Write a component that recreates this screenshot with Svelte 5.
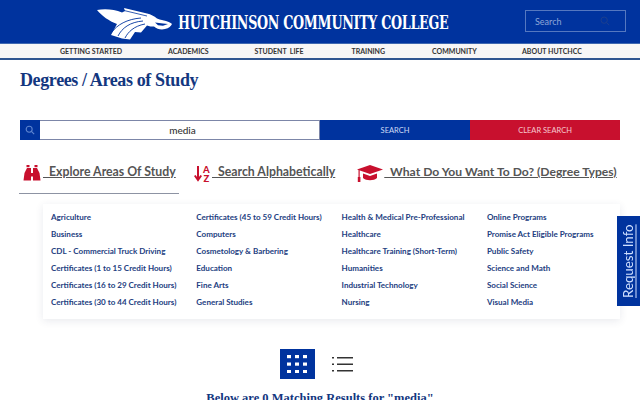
<script>
  const nav = ['GETTING STARTED', 'ACADEMICS', 'STUDENT  LIFE', 'TRAINING', 'COMMUNITY', 'ABOUT HUTCHCC'];
  const cols = [
    ['Agriculture','Business','CDL - Commercial Truck Driving','Certificates (1 to 15 Credit Hours)','Certificates (16 to 29 Credit Hours)','Certificates (30 to 44 Credit Hours)'],
    ['Certificates (45 to 59 Credit Hours)','Computers','Cosmetology & Barbering','Education','Fine Arts','General Studies'],
    ['Health & Medical Pre-Professional','Healthcare','Healthcare Training (Short-Term)','Humanities','Industrial Technology','Nursing'],
    ['Online Programs','Promise Act Eligible Programs','Public Safety','Science and Math','Social Science','Visual Media']
  ];
</script>

<header class="top">
  <div class="brand">
    <svg class="logo" viewBox="0 0 76 33" width="76" height="33" aria-hidden="true">
      <path fill="#fff" d="M0 3 C7 1.500 17 2 25 5.500 L28 4 L27 1 L50 6.500 C54 7.500 57 9 60 11.500 C64 13 66 13 69 14 C72 15 74 16 75 17 C74 19 72 21.500 68 22 C64 23 60 22 57 19.500 C55 19.500 52 19.500 50 18.500 L44 25.500 L38 25 L33 32.500 L25 31.500 L14 28 L20 17 C12 14 5 9 0 3 Z"/>
      <g fill="none" stroke="#00339e" stroke-width="0.900">
        <path d="M15 25 C20 18 30 12 44 11"/>
        <path d="M21 29 C25 21 33 15 46 14"/>
        <path d="M28 31 C31 25 37 19 48 17"/>
      </g>
      <path fill="#00339e" d="M58 15.500 L66 16.500 L71 17 L66 18.800 L61 18.300 Z"/>
      <path fill="none" stroke="#00339e" stroke-width="0.800" d="M27 3.500 L50 9"/>
    </svg>
    <span class="college">HUTCHINSON COMMUNITY COLLEGE</span>
  </div>
  <div class="topsearch">
    <span>Search</span>
    <svg viewBox="0 0 12 12" width="10" height="10" aria-hidden="true"><circle cx="5" cy="5" r="3.800" fill="none" stroke="#1c3f8f" stroke-width="1.200"/><path d="M8 8l3 3" stroke="#1c3f8f" stroke-width="1.200"/></svg>
  </div>
</header>

<nav class="menu">
  {#each nav as label}
    <span class="item">{label}</span>
  {/each}
</nav>

<main>
  <h1>Degrees / Areas of Study</h1>

  <div class="searchbar">
    <span class="lens">
      <svg viewBox="0 0 12 12" width="10" height="10" aria-hidden="true"><circle cx="5" cy="5" r="3.600" fill="none" stroke="#5f86d0" stroke-width="1.300"/><path d="M8 8l3 3" stroke="#5f86d0" stroke-width="1.300"/></svg>
    </span>
    <span class="query">media</span>
    <span class="btn blue">SEARCH</span>
    <span class="btn red">CLEAR SEARCH</span>
  </div>

  <div class="tabs">
    <div class="tab first">
      <svg viewBox="0 0 18 16" width="18" height="16" aria-hidden="true"><path fill="#c8102e" d="M0.500 15.500 L1.500 8 L4 3 H8 V15.500 Z M10 15.500 V3 H14 L16.500 8 L17.500 15.500 Z"/><rect x="8" y="8" width="2" height="3.500" fill="#c8102e"/><rect x="3.500" y="0" width="3" height="2.200" fill="#c8102e"/><rect x="11.500" y="0" width="3" height="2.200" fill="#c8102e"/></svg>
      <a>&nbsp;&nbsp;Explore Areas Of Study</a>
    </div>
    <div class="tab second">
      <svg viewBox="0 0 18 17" width="18" height="17" aria-hidden="true"><path d="M4 1v13M0.800 10.500 4 15l3.200-4.500" fill="none" stroke="#c8102e" stroke-width="2"/><text x="9" y="7.500" class="az">A</text><text x="9.500" y="16.500" class="az">Z</text></svg>
      <a>&nbsp;&nbsp;Search Alphabetically</a>
    </div>
    <div class="tab third">
      <svg viewBox="0 0 26 17" width="26" height="17" aria-hidden="true"><path fill="#c8102e" d="M13 0 26 4.500 13 9 0 4.500Z"/><path fill="#c8102e" d="M6 8.500 13 11l7-2.500v4.500c-3 3-11 3-14 0Z"/><rect x="1.500" y="5" width="1.200" height="8" fill="#c8102e"/><rect x="0.800" y="12" width="2.600" height="5" fill="#c8102e"/></svg>
      <a>&nbsp;&nbsp;What Do You Want To Do? (Degree Types)</a>
    </div>
  </div>

  <section class="panel">
    {#each cols as col}
      <ul>
        {#each col as entry}<li>{entry}</li>{/each}
      </ul>
    {/each}
  </section>

  <div class="views">
    <span class="grid-btn">
      <svg viewBox="0 0 20 18" width="20" height="18" aria-hidden="true">
        {#each [0, 7.500, 15] as y}
          {#each [0, 8, 16] as x}<rect {x} {y} width="4" height="3.200" fill="#fff"/>{/each}
        {/each}
      </svg>
    </span>
    <svg class="list-btn" viewBox="0 0 21 16" width="21" height="16" aria-hidden="true">
      {#each [1, 7.500, 14] as y}
        <rect x="0" {y} width="2" height="1.500" fill="#333"/><rect x="5" {y} width="16" height="1.500" fill="#333"/>
      {/each}
    </svg>
  </div>

  <h2>Below are 0 Matching Results for "media"</h2>
</main>

<a class="request"><span>Request Info</span></a>

<style>
  :global(body) { margin: 0; background: #fff; overflow: hidden; font-family: Lato, "Liberation Sans", sans-serif; }
  .top { height: 43px; box-sizing: border-box; background: #00339e; display: flex; align-items: center; position: relative; padding-left: 97px; }
  .brand { display: flex; align-items: center; gap: 5px; }
  .logo { margin-top: 4px; }
  .college { font-family: "DejaVu Serif", "Liberation Serif", serif; font-weight: 700; font-size: 18px; color: #fff; letter-spacing: -0.4px; transform: scaleX(0.705); transform-origin: left center; white-space: nowrap; display: inline-block; width: 270px; margin-top: 2px; }
  .topsearch { position: absolute; left: 525px; top: 10px; width: 101px; height: 22px; box-sizing: border-box; border: 1px solid #5578c0; display: flex; align-items: center; justify-content: space-between; padding: 0 15px 0 9px; font-size: 9px; color: #8ea6d8; }
  .menu { height: 17px; box-sizing: border-box; background: #f7f6f6; border-bottom: 2px solid #2f5590; border-top: 1px solid #3f68b0; display: grid; grid-template-columns: 108px 86.500px 97px 80.500px 90px auto; padding-left: 60px; align-items: center; font-size: 7px; font-weight: 700; color: #333; }
  .item { white-space: pre; }
  main { padding: 0 20px; }
  h1 { margin: 0; padding-top: 9px; height: 60px; box-sizing: border-box; font-family: "Liberation Serif", serif; font-size: 18px; letter-spacing: -0.380px; line-height: 22px; font-weight: 700; color: #13377f; }
  .searchbar { height: 20px; display: grid; grid-template-columns: 20px 280px 150px 150px; font-size: 7.500px; color: #fff; }
  .lens { background: #00339e; display: flex; align-items: center; justify-content: center; }
  .query { border: 1px solid #7c86a8; border-left: 0; display: flex; align-items: center; justify-content: center; padding-left: 6px; font-size: 10px; font-weight: 500; color: #333; box-sizing: border-box; }
  .btn { display: flex; align-items: center; justify-content: center; }
  .blue { background: #00339e; color: #cfdcf5; }
  .red { background: #c8102e; color: #f6c9d0; }
  .tabs { display: flex; height: 54px; font-size: 12.300px; color: #555; margin-left: -1px; }
  .tab { display: flex; align-items: center; gap: 2px; height: 54px; box-sizing: border-box; padding-top: 25px; padding-bottom: 12px; }
  .tab a { text-decoration: underline; white-space: pre; font-weight: 700; color: #555; margin-bottom: 4px; }
  .first { width: 160px; padding-left: 4px; border-bottom: 1px solid #8d93a3; }
  .second { margin-left: 15px; gap: 0; }
  .third { margin-left: 22px; font-size: 12.150px; gap: 1px; }
  .az { font: 900 9.500px Lato, sans-serif; fill: #c8102e; }
  .panel { margin: 10px 0 0 23px; width: 577px; height: 115px; box-sizing: border-box; padding: 5px 0 0 8px; background: #fff; box-shadow: 0 2px 8px rgba(40, 50, 90, 0.1); display: grid; grid-template-columns: repeat(4, 145.300px); }
  ul { margin: 0; padding: 0; list-style: none; }
  li { height: 17px; line-height: 17px; font-size: 8.050px; font-weight: 700; color: #23407f; white-space: nowrap; }
  .views { margin-top: 30px; display: flex; justify-content: center; align-items: center; gap: 17px; margin-left: -8px; }
  .grid-btn { width: 35px; height: 30px; background: #00339e; display: flex; align-items: center; justify-content: center; }
  h2 { margin: 11px 0 0; font-family: "Liberation Serif", serif; font-size: 12.500px; line-height: 16px; font-weight: 700; color: #13377f; text-align: center; }
  .request { position: fixed; left: 617px; top: 216px; width: 23px; height: 90px; background: #00339e; color: #cfe0ff; font-size: 13.300px; writing-mode: vertical-rl; transform: rotate(180deg); display: flex; align-items: center; justify-content: center; white-space: nowrap; }
  .request span { text-decoration: underline; }
</style>
